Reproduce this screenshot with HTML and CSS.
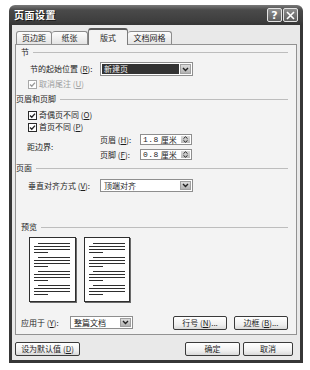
FILE: index.html
```html
<!DOCTYPE html>
<html lang="zh-CN">
<head>
<meta charset="utf-8">
<title>页面设置</title>
<link rel="stylesheet" href="styles.css">
</head>
<body>
<div class="dialog">
  <div class="titlebar">
    <span class="title">页面设置</span>
    <div class="tb-btns">
      <span class="tb-btn help">?</span>
      <span class="tb-btn close"><svg width="9" height="9" viewBox="0 0 9 9"><path d="M1 1L8 8M8 1L1 8" stroke="#fff" stroke-width="1.6"/></svg></span>
    </div>
  </div>
  <div class="body">
    <div class="tabs">
      <div class="tab t1">页边距</div>
      <div class="tab t2">纸张</div>
      <div class="tab t3 active">版式</div>
      <div class="tab t4">文档网格</div>
    </div>
    <div class="panel">
      <div class="group g-sec"><span>节</span><i class="rule"></i></div>
      <div class="row r-start">
        <span class="lbl w70">节的起始位置 (<u>R</u>):</span>
        <div class="select w93"><span class="val hl">新建页</span><span class="drop"><svg width="7" height="5" viewBox="0 0 7 5"><path d="M1 1L3.5 3.5L6 1" fill="none" stroke="#222" stroke-width="1.4"/></svg></span></div>
      </div>
      <div class="check disabled r-endnote"><span class="box"><svg width="7" height="7" viewBox="0 0 7 7"><path d="M1 3.5L2.8 5.3L6 1.6" fill="none" stroke="#9a9a9a" stroke-width="1.3"/></svg></span>取消尾注 (<u>U</u>)</div>
      <div class="group g-hf"><span>页眉和页脚</span><i class="rule"></i></div>
      <div class="check r-oe"><span class="box"><svg width="7" height="7" viewBox="0 0 7 7"><path d="M1 3.5L2.8 5.3L6 1.6" fill="none" stroke="#222" stroke-width="1.3"/></svg></span>奇偶页不同 (<u>O</u>)</div>
      <div class="check"><span class="box"><svg width="7" height="7" viewBox="0 0 7 7"><path d="M1 3.5L2.8 5.3L6 1.6" fill="none" stroke="#222" stroke-width="1.3"/></svg></span>首页不同 (<u>P</u>)</div>
      <div class="margins">
        <span class="lbl w73">距边界:</span>
        <div class="mcol">
          <div class="mrow"><span class="lbl w40">页眉 (<u>H</u>):</span><div class="spin"><span class="num"><span class="digits">1.8</span> 厘米</span><span class="arrows"><svg width="5" height="7" viewBox="0 0 5 7"><path d="M0.5 2.6L2.5 0.8L4.5 2.6M0.5 4.4L2.5 6.2L4.5 4.4" fill="none" stroke="#222" stroke-width="1"/></svg></span></div></div>
          <div class="mrow"><span class="lbl w40">页脚 (<u>F</u>):</span><div class="spin"><span class="num"><span class="digits">0.8</span> 厘米</span><span class="arrows"><svg width="5" height="7" viewBox="0 0 5 7"><path d="M0.5 2.6L2.5 0.8L4.5 2.6M0.5 4.4L2.5 6.2L4.5 4.4" fill="none" stroke="#222" stroke-width="1"/></svg></span></div></div>
        </div>
      </div>
      <div class="group g-page"><span>页面</span><i class="rule"></i></div>
      <div class="row r-valign">
        <span class="lbl w72">垂直对齐方式 (<u>V</u>):</span>
        <div class="select w93 h13"><span class="val">顶端对齐</span><span class="drop"><svg width="7" height="5" viewBox="0 0 7 5"><path d="M1 1L3.5 3.5L6 1" fill="none" stroke="#222" stroke-width="1.4"/></svg></span></div>
      </div>
      <div class="group g-prev"><span>预览</span><i class="rule"></i></div>
      <div class="preview">
        <div class="page">
          <div class="para"><i class="ln a"></i><i class="ln b"></i><i class="ln b"></i><i class="ln d"></i></div>
          <div class="para"><i class="ln a"></i><i class="ln b"></i><i class="ln b"></i><i class="ln d"></i></div>
          <div class="para"><i class="ln a"></i><i class="ln b"></i><i class="ln b"></i><i class="ln d"></i></div>
          <div class="para"><i class="ln a"></i><i class="ln b"></i><i class="ln b"></i><i class="ln d"></i></div>
        </div>
        <div class="page p2">
          <div class="para"><i class="ln a"></i><i class="ln b"></i><i class="ln b"></i><i class="ln d"></i></div>
          <div class="para"><i class="ln a"></i><i class="ln b"></i><i class="ln b"></i><i class="ln d"></i></div>
          <div class="para"><i class="ln a"></i><i class="ln b"></i><i class="ln b"></i><i class="ln d"></i></div>
          <div class="para"><i class="ln a"></i><i class="ln b"></i><i class="ln b"></i><i class="ln d"></i></div>
        </div>
      </div>
      <div class="row r-apply">
        <span class="lbl w49">应用于 (<u>Y</u>):</span>
        <div class="select w63 h13"><span class="val">整篇文档</span><span class="drop"><svg width="7" height="5" viewBox="0 0 7 5"><path d="M1 1L3.5 3.5L6 1" fill="none" stroke="#222" stroke-width="1.4"/></svg></span></div>
        <span class="btn b-line">行号 (<u>N</u>)...</span>
        <span class="btn b-border">边框 (<u>B</u>)...</span>
      </div>
    </div>
    <div class="footer">
      <span class="btn b-default">设为默认值 (<u>D</u>)</span>
      <span class="btn b-ok">确定</span>
      <span class="btn b-cancel">取消</span>
    </div>
  </div>
</div>
</body>
</html>
```
FILE: styles.css
```css
* { box-sizing: border-box; margin: 0; padding: 0; }
html, body { background: #fff; }
body {
  margin: 0;
  font-family: "Noto Sans CJK SC", "Noto Sans", sans-serif;
  font-size: 8px;
  line-height: 1;
  color: #1e1e1e;
}
u { text-decoration: underline; text-underline-offset: 1px; }
i { font-style: normal; display: block; }

.dialog {
  margin: 5px 0 0 9px;
  width: 294px;
  height: 358px;
  display: flex;
  flex-direction: column;
}
.titlebar {
  height: 20px;
  flex: none;
  background: linear-gradient(#7a7a7a, #4a4a4a 25%, #3e3e3e 80%, #353535);
  border-radius: 6px 6px 0 0;
  display: flex;
  align-items: center;
  padding: 0 5px 0 5px;
  color: #fff;
}
.title {
  font-size: 10px;
  font-weight: bold;
  letter-spacing: 0.5px;
  text-shadow: 1px 1px 0 #1a1a1a;
}
.tb-btns { margin-left: auto; display: flex; gap: 1px; }
.tb-btn {
  width: 15px;
  height: 14px;
  border: 1px solid #e4e4e4;
  border-radius: 2px;
  background: linear-gradient(#8e8e8e, #5e5e5e);
  display: flex;
  align-items: center;
  justify-content: center;
  color: #fff;
  font: bold 11px "DejaVu Sans", sans-serif;
}

.body {
  flex: 1;
  background: #e9e9e9;
  border: 3px solid #363636;
  border-top: 0;
  padding: 3px 3px 4px 3px;
  display: flex;
  flex-direction: column;
}

.tabs {
  display: flex;
  height: 16px;
  align-items: flex-end;
  padding-left: 1px;
  position: relative;
  z-index: 1;
}
.tab {
  height: 13px;
  border: 1px solid #8c8c8c;
  border-bottom: 0;
  border-radius: 3px 3px 0 0;
  background: linear-gradient(#fdfdfd, #e4e4e4);
  display: flex;
  align-items: center;
  justify-content: center;
}
.t1 { width: 36px; }
.t2 { width: 36px; border-left: 0; }
.t3 { width: 40px; }
.t4 { width: 44px; border-left: 0; }
.tab.active {
  height: 17px;
  margin-bottom: -1px;
  background: #f3f3f3;
  border-color: #7c7c7c;
  border-top: 2px solid #5a5a5a;
}

.panel {
  height: 291px;
  border: 1px solid #929292;
  background: #f3f3f3;
  display: flex;
  flex-direction: column;
}

.group { display: flex; align-items: center; height: 12px; flex: none; }
.group .rule { flex: 1; height: 1px; background: #bdbdbd; margin: 0 8px 0 4px; }
.g-sec { margin-top: 1px; padding-left: 5px; }
.g-hf { margin-top: 3px; padding-left: 0; }
.g-page { margin-top: 2px; padding-left: 0; }
.g-prev { margin-top: 29px; padding-left: 5px; }

.row { display: flex; align-items: center; flex: none; }
.r-start { margin-top: 4px; height: 14px; padding-left: 14px; }
.r-valign { margin-top: 5px; height: 13px; padding-left: 12px; }
.r-apply { margin-top: 14px; height: 13px; padding-left: 5px; }

.lbl { flex: none; white-space: nowrap; }
.w40 { width: 40px; }
.w49 { width: 49px; }
.w70 { width: 70px; }
.w72 { width: 72px; }
.w73 { width: 73px; }

.select {
  display: flex;
  height: 14px;
  border: 1px solid #8e8e8e;
  background: #fff;
  padding: 1px;
  flex: none;
}
.select.h13 { height: 13px; }
.w93 { width: 93px; }
.w63 { width: 63px; }
.select .val { flex: 1; display: flex; align-items: center; padding-left: 2px; margin-right: 1px; }
.select .val.hl { background: #333; color: #f2f2f2; }
.select .drop {
  width: 11px;
  background: linear-gradient(#dcdcdc, #b2b2b2);
  border: 1px solid #a0a0a0;
  display: flex;
  align-items: center;
  justify-content: center;
}

.check { display: flex; align-items: center; height: 12px; padding-left: 12px; flex: none; }
.r-endnote { margin-top: 2px; }
.r-oe { margin-top: 4px; }
.box {
  width: 9px;
  height: 9px;
  border: 1px solid #2a2a2a;
  background: #fff;
  margin-right: 2px;
  display: flex;
  align-items: center;
  justify-content: center;
}
.check.disabled { color: #9d9d9d; }
.check.disabled .box { border-color: #a8a8a8; }

.margins { display: flex; align-items: center; margin-top: 1px; padding-left: 11px; flex: none; }
.mcol { display: flex; flex-direction: column; gap: 4px; }
.mrow { display: flex; align-items: center; height: 11px; }
.spin { display: flex; width: 52px; height: 11px; border: 1px solid #8e8e8e; background: #fff; }
.spin .num { flex: 1; display: flex; align-items: center; padding-left: 2px; white-space: pre; }
.spin .digits { font-family: "Liberation Mono", monospace; letter-spacing: 0.5px; }
.spin .arrows {
  width: 9px;
  margin: 1px;
  background: linear-gradient(#dadada, #b8b8b8);
  display: flex;
  align-items: center;
  justify-content: center;
}

.preview { display: flex; gap: 8px; padding-left: 13px; height: 65px; margin-top: 4px; flex: none; }
.page {
  width: 47px;
  height: 65px;
  border: 1px solid #2e2e2e;
  box-shadow: 1px 1px 0 #6a6a6a;
  background: #fff;
  padding-top: 5px;
  overflow: hidden;
}
.page.p2 { width: 46px; }
.para { display: flex; flex-direction: column; gap: 2px; margin-bottom: 4px; }
.ln { height: 1px; background: #2e2e2e; }
.ln.a { margin-left: 8px; width: 32px; }
.ln.b { margin-left: 4px; width: 36px; }
.ln.d { margin-left: 4px; width: 14px; }

.btn {
  height: 14px;
  border: 1px solid #3a3a3a;
  border-radius: 2px;
  background: linear-gradient(#ffffff, #efefef 65%, #d9d9d9);
  display: flex;
  align-items: center;
  justify-content: center;
  white-space: nowrap;
  flex: none;
}
.r-apply .btn { height: 14px; }
.b-line { width: 54px; margin-left: 40px; }
.b-border { width: 54px; margin-left: 7px; }

.footer { display: flex; margin-top: 7px; padding-right: 4px; flex: none; }
.b-default { width: 65px; }
.b-ok { width: 55px; margin-left: auto; }
.b-cancel { width: 50px; margin-left: 3px; }
```
